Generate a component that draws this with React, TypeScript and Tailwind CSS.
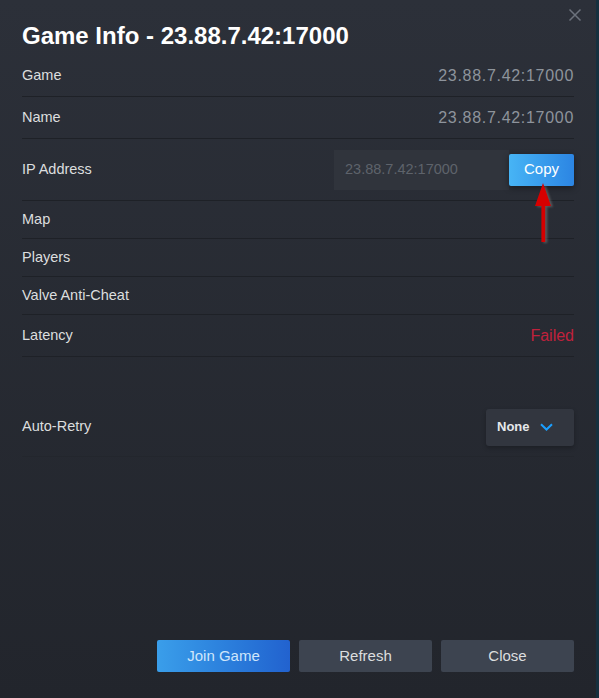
import React from 'react';

const font = { fontFamily: '"Liberation Sans", Arial, sans-serif' };

export default function App() {
  const rows = [
    { label: 'Game', value: '23.88.7.42:17000', h: 'h-[41px]' },
    { label: 'Name', value: '23.88.7.42:17000', h: 'h-[42px]' },
  ];
  const plainRows = [
    { label: 'Map', h: 'h-[38px]' },
    { label: 'Players', h: 'h-[38px]' },
    { label: 'Valve Anti-Cheat', h: 'h-[38px]' },
  ];

  return (
    <div className="relative flex h-[698px] w-[599px] overflow-hidden" style={font}>
      <div className="flex w-[596px] flex-col bg-gradient-to-b from-[#2c3039] to-[#22252c] px-[22px] pb-[26px] pt-[22px]">
        <h1 className="mb-[6px] h-[28px] text-[24px] font-bold leading-[28px] text-white">
          Game Info - 23.88.7.42:17000
        </h1>

        {rows.map((row) => (
          <div
            key={row.label}
            className={`flex items-center justify-between border-b border-[#1e2127] ${row.h}`}
          >
            <span className="text-[14.5px] text-[#dcdedf]">{row.label}</span>
            <span className="text-[16px] tracking-[0.7px] text-[#8e949c]">{row.value}</span>
          </div>
        ))}

        <div className="flex h-[62px] items-center justify-between border-b border-[#1e2127]">
          <span className="text-[14.5px] text-[#dcdedf]">IP Address</span>
          <div className="flex items-center">
            <div className="flex h-[40px] w-[175px] items-center bg-[#30343c] pl-[11px] text-[14.5px] text-[#5e636b]">
              23.88.7.42:17000
            </div>
            <button className="h-[32px] w-[65px] rounded-[2px] bg-gradient-to-r from-[#47b4f5] to-[#2c85e3] text-[15px] text-white shadow-[0_2px_6px_rgba(0,0,0,0.4)]">
              Copy
            </button>
          </div>
        </div>

        {plainRows.map((row) => (
          <div
            key={row.label}
            className={`flex items-center border-b border-[#1e2127] ${row.h}`}
          >
            <span className="text-[14.5px] text-[#dcdedf]">{row.label}</span>
          </div>
        ))}

        <div className="flex h-[42px] items-center justify-between border-b border-[#1e2127]">
          <span className="text-[14.5px] text-[#dcdedf]">Latency</span>
          <span className="text-[16px] text-[#c0213c]">Failed</span>
        </div>

        <div className="h-[41px]" />

        <div className="flex h-[59px] items-center justify-between border-b border-[#23262d]">
          <span className="text-[14.5px] text-[#dcdedf]">Auto-Retry</span>
          <div className="flex h-[37px] w-[88px] items-center gap-[10px] rounded-[3px] bg-[#32363f] pl-[11px] shadow-[0_2px_4px_rgba(0,0,0,0.25)]">
            <span className="text-[13px] font-bold text-[#e6e8ea]">None</span>
            <svg width="13" height="8" viewBox="0 0 13 8" fill="none">
              <path d="M1 1.2L6.5 6.5L12 1.2" stroke="#1a9fff" strokeWidth="2" />
            </svg>
          </div>
        </div>

        <div className="flex-1" />

        <div className="flex justify-end gap-[9px]">
          <button className="h-[32px] w-[133px] rounded-[2px] bg-gradient-to-r from-[#3a9eea] to-[#2262cf] text-[15px] text-[#cfe6fb]">
            Join Game
          </button>
          <button className="h-[32px] w-[133px] rounded-[2px] bg-[#3d4450] text-[15px] text-[#dcdedf]">
            Refresh
          </button>
          <button className="h-[32px] w-[133px] rounded-[2px] bg-[#3d4450] text-[15px] text-[#dcdedf]">
            Close
          </button>
        </div>
      </div>
      <div className="w-[3px] bg-[#16303e]" />

      <svg className="absolute left-[568px] top-[8px]" width="14" height="14" viewBox="0 0 14 14" fill="none">
        <path d="M1.5 1.5L12.5 12.5M12.5 1.5L1.5 12.5" stroke="#6c727c" strokeWidth="1.5" />
      </svg>

      <svg
        className="absolute left-[533px] top-[182px] drop-shadow-[2px_1px_1px_rgba(120,120,120,0.6)]"
        width="22"
        height="62"
        viewBox="0 0 22 62"
        fill="none"
      >
        <path d="M10 1L18 24H12.2V60H8.4V24H2Z" fill="#d60000" />
      </svg>
    </div>
  );
}
